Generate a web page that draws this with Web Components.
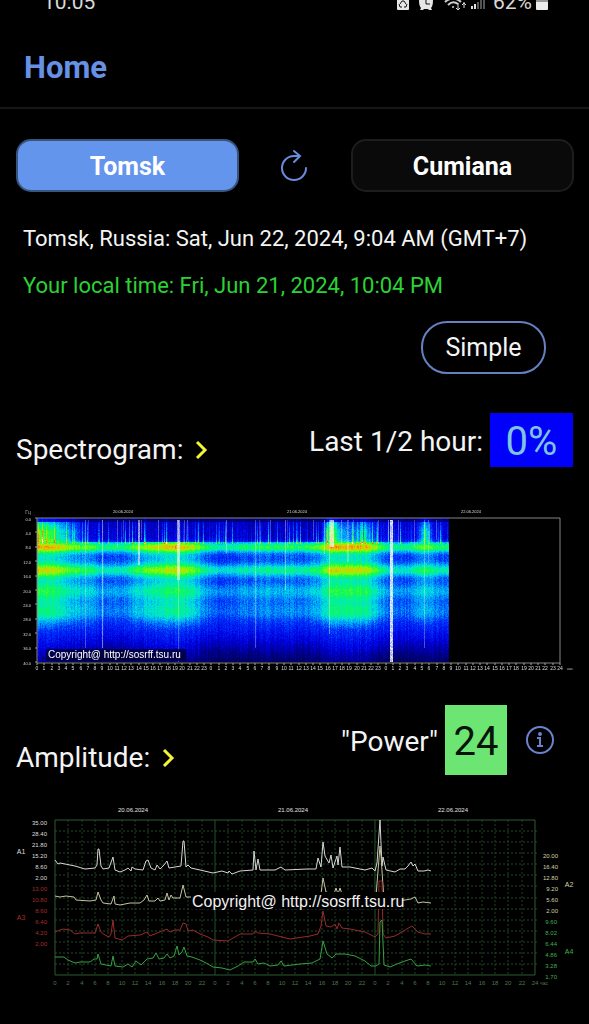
<!DOCTYPE html>
<html lang="en">
<head>
<meta charset="utf-8">
<meta name="viewport" content="width=device-width, initial-scale=1">
<title>Home</title>
<style>
  html { background: #000; }
  body { margin: 0; background: #000; color: #f4f4f4; font-family: Roboto, "Liberation Sans", sans-serif; }
</style>
</head>
<body>
<resonance-app></resonance-app>
<script>
const define = (tag, html, setup) => {
  const tpl = document.createElement('template');
  tpl.innerHTML = html;
  customElements.define(tag, class extends HTMLElement {
    constructor() {
      super();
      this.attachShadow({ mode: 'open' }).append(tpl.content.cloneNode(true));
    }
    connectedCallback() { if (setup) setup(this, this.shadowRoot); }
  });
};

define('status-bar', `
<style>
  :host { display: flex; justify-content: space-between; align-items: flex-end; height: 14px; overflow: hidden; padding: 0 41px 0 43px; font-size: 21px; line-height: 24px; color: #d8d8d8; }
  .right { display: flex; align-items: flex-end; gap: 4px; }
  svg { display: block; flex: none; }
</style>
<span>10:05</span>
<div class="right">
  <svg width="92" height="14" viewBox="0 0 92 14" aria-hidden="true">
    <path d="M0 0H12V9Q12 10 11 10H1Q0 10 0 9Z" fill="#e6e6e6"/>
    <path d="M3 4L5 1H7L9 4M2 4L3 7H5M10 4L9 7H7" fill="none" stroke="#111" stroke-width="1"/>
    <path d="M22 0H36Q36 6 34 8L35 10H32L31 9H27L26 10H23L24 8Q22 6 22 0Z" fill="#e6e6e6"/>
    <path d="M29 0V4H33" fill="none" stroke="#111" stroke-width="1"/>
    <path d="M48 2Q56 -5 64 2M51 5Q56 0 61 4" fill="none" stroke="#ccc" stroke-width="2"/>
    <circle cx="56" cy="7" r="1" fill="#ccc"/>
    <path d="M61 3V10M59 8L61 10L63 8M67 8V2M65 5L67 3L69 5" fill="none" stroke="#ddd" stroke-width="1"/>
    <path d="M75 9V6M78 9V4" stroke="#ddd" stroke-width="2"/>
    <path d="M81 9V2M84 9V0M87 9V0" stroke="#555" stroke-width="2"/>
  </svg>
  <span>62%</span>
  <svg width="12" height="14" viewBox="0 0 12 14" aria-hidden="true"><path d="M0 0H12V9Q12 10 11 10H1Q0 10 0 9Z" fill="#eee"/><path d="M0 0H12V2H0Z" fill="#999"/></svg>
</div>`);

define('app-header', `
<style>
  :host { display: flex; align-items: center; height: 95px; padding: 0 24px; border-bottom: 2px solid #161616; box-sizing: border-box; }
  a { color: #6791e4; font-size: 31px; line-height: 36px; font-weight: 700; text-decoration: none; margin-top: 14px; }
</style>
<a href="#home"><slot></slot></a>`);

define('station-button', `
<style>
  :host { display: block; }
  button { display: block; width: 100%; height: 53px; border: 2px solid #1d1d1d; border-radius: 15px; background: #0a0a0a; color: #fff; font: 700 25px/30px Roboto, sans-serif; padding: 2px 0 0; }
  :host([active]) button { background: #6495ed; border-color: #38557f; }
</style>
<button type="button"><slot></slot></button>`);

define('icon-button', `
<style>
  :host { display: inline-flex; }
  button { display: flex; padding: 0; border: 0; background: none; color: inherit; }
</style>
<button type="button"><slot></slot></button>`,
(el, root) => root.querySelector('button').setAttribute('aria-label', el.getAttribute('label')));

define('pill-button', `
<style>
  :host { display: block; }
  button { display: block; width: 125px; height: 53px; border: 2px solid #6780c4; border-radius: 26px; background: transparent; color: #f4f4f4; font: 400 25px/30px Roboto, sans-serif; padding: 0; }
</style>
<button type="button"><slot></slot></button>`);

define('chart-heading', `
<style>
  :host { display: flex; align-items: flex-end; justify-content: space-between; }
  .title { display: flex; align-items: center; gap: 11px; }
  h2 { margin: 0; font-size: 28px; line-height: 34px; font-weight: 400; }
  icon-button { color: #f4f436; }
  .side { display: flex; align-items: center; }
</style>
<div class="title"><h2></h2>
  <icon-button label="Open chart"><svg width="14" height="20" viewBox="0 0 14 20"><path d="M3 2L11 10L3 18" fill="none" stroke="currentColor" stroke-width="3"/></svg></icon-button>
</div>
<div class="side"><slot></slot></div>`,
(el, root) => { root.querySelector('h2').textContent = el.getAttribute('heading'); });

define('value-badge', `
<style>
  :host { display: flex; align-items: center; justify-content: center; font-size: 40px; line-height: 48px; box-sizing: border-box; padding-top: 4px; }
  :host([tone="blue"]) { background: #0000fb; color: #7ec4de; height: 54px; width: 83px; }
  :host([tone="green"]) { background: #6de572; color: #08140a; height: 70px; width: 62px; }
</style>
<slot></slot>`);

/* Shared chart helpers */
const lerp = (pts, x) => {
  if (x <= pts[0][0]) return pts[0][1];
  for (let i = 1; i < pts.length; i++) {
    if (x <= pts[i][0]) {
      const [a, b] = pts[i - 1], [c, d] = pts[i];
      return b + (d - b) * (x - a) / (c - a);
    }
  }
  return pts[pts.length - 1][1];
};
const txt = (x, y, s, fill, anchor = 'middle', size = 7) =>
  `<text x="${x}" y="${y}" fill="${fill}" text-anchor="${anchor}" font-size="${size}">${s}</text>`;

const STOPS = [[0, 0, 0, 70], [.1, 0, 0, 130], [.2, 0, 0, 225], [.32, 0, 50, 250], [.44, 0, 160, 250], [.53, 0, 228, 215],
  [.64, 10, 250, 90], [.76, 140, 250, 0], [.85, 240, 190, 0], [.94, 250, 90, 30], [1, 255, 230, 220]];
const colour = v => {
  v = Math.max(0, Math.min(1, v));
  return [1, 2, 3].map(k => lerp(STOPS.map(s => [s[0], s[k]]), v));
};
const LUT = Array.from({ length: 256 }, (_, i) => colour(i / 255));

/* Strength of the resonance bands over time, in chart x */
const ENERGY = [[37, 1], [58, .95], [68, .72], [90, .55], [100, .35], [125, .38], [136, .65], [150, .8], [178, .98], [192, .8], [206, .42], [222, .12],
  [240, .3], [255, .42], [300, .4], [318, .6], [330, 1], [366, .98], [378, .65], [388, .3], [408, .3], [424, .7], [436, .4], [448, .3]];
const TOP = [[37, .72], [58, .55], [66, .4], [80, .2], [88, .08], [320, .06], [326, .45], [331, .8], [338, .45], [350, .3], [366, .4], [378, .12], [415, .12], [425, .55], [432, .15], [448, .08]];
/* x, width, strength, reach in Hz */
const STREAKS = [[85, 1, .3, 36], [88, 1, .2, 7], [102, 1, .5, 36], [117, 1, .3, 8], [123, 1, .25, 6], [129, 1, .25, 7], [138, 2, .6, 13], [141, 1, .3, 6], [158, 1, .35, 10],
  [177, 3, .6, 17], [178, 1, .3, 40], [184, 1, .3, 7], [187, 1, .3, 6], [226, 1, .4, 10], [255, 1, .35, 36], [259, 1, .2, 14], [270, 1, .3, 7], [285, 1, .4, 20], [287, 1, .2, 8], [313, 1, .3, 6], [324, 1, .4, 10],
  [329, 1, .4, 32], [330, 4, .7, 8], [341, 1, .35, 7], [347, 2, .3, 12], [353, 1, .25, 6], [378, 1, .3, 7], [388, 1, .4, 6], [390, 3, .85, 40], [398, 1, .3, 7], [414, 1, .3, 8], [424, 1, .3, 36], [428, 1, .3, 12], [436, 1, .3, 6]];

const paintSpectrum = canvas => {
  const W = canvas.width, H = canvas.height, ctx = canvas.getContext('2d');
  const img = ctx.createImageData(W, H);
  let seed = 7;
  const rnd = () => (seed = (seed * 16807) % 2147483647) / 2147483647;
  const g = (f, c, s) => Math.exp(-((f - c) ** 2) / (2 * s * s));
  for (let i = 0; i < W; i++) {
    const x = 37 + i, e = lerp(ENERGY, x), t = lerp(TOP, x);
    const col = (rnd() - .5) * .06, spike = rnd() > .72 ? rnd() * .3 : 0;
    for (let j = 0; j < H; j++) {
      const f = j / H * 40;
      let v = f < 6.5 ? .12 + t * .85 * Math.min(1, .55 + f / 8) : .27 + .27 * e ** 1.4;
      if (f > 27) v -= (v - .23) * Math.min(1, (f - 27) / 4) * .7;
      if (f > 31) v -= Math.min(.2, (f - 31) * .024);
      v += (.28 + .06 * e) * g(f, 8, 1) + (.22 + .06 * e) * g(f, 14.4, 1.2) + .12 * g(f, 20.3, 1.5) + .07 * g(f, 25.6, 1.6);
      if (f < 7) v += spike * (.4 + f / 10);
      v += col + (rnd() - .5) * .08;
      if (f < 1) v *= .5;
      let [r, gr, b] = LUT[Math.max(0, Math.min(255, Math.round(v * 255)))];
      for (const [sx, sw, st, reach] of STREAKS) {
        if (x >= sx && x < sx + sw && f < reach && f > .4) {
          const k = st * (.75 + rnd() * .4);
          r += (245 - r) * k; gr += (250 - gr) * k; b += (245 - b) * k;
        }
      }
      img.data.set([r, gr, b, 255], (j * W + i) * 4);
    }
  }
  ctx.putImageData(img, 0, 0);
};

define('spectrogram-chart', `
<style>
  :host { display: block; }
  svg { display: block; width: 100%; height: auto; font-family: "Liberation Sans", Arial, sans-serif; }
  canvas { display: block; width: 412px; height: 144px; }
</style>
<svg viewBox="0 0 589 180" role="img" aria-label="Spectrogram of three days"></svg>`,
(el, root) => {
  const svg = root.querySelector('svg');
  const step = 523 / 72;
  let s = '<foreignObject x="37" y="18" width="412" height="144"><canvas width="412" height="144"></canvas></foreignObject>';
  s += '<path d="M37 18H560V163H37Z" fill="none" stroke="#858585"/>';
  s += txt(28, 14, 'Гц', '#aaa', 'middle', 5);
  ['20.06.2024', '21.06.2024', '22.06.2024'].forEach((d, i) => { s += txt(123 + i * 174, 13, d, '#ddd', 'middle', 4); });
  for (let i = 0; i <= 10; i++) {
    s += txt(31, Math.round(20.5 + i * 14.4), (i * 4).toFixed(1), '#ddd', 'end', 4);
    s += `<path d="M35 ${Math.round(18 + i * 14.4)}H37" stroke="#999"/>`;
  }
  for (let i = 0; i <= 72; i++) {
    const x = Math.round(37 + i * step);
    s += `<path d="M${x} 163V165" stroke="#aaa"/>` + txt(x, 170, i === 72 ? 24 : i % 24, '#ddd', 'middle', 5);
  }
  s += txt(570, 170, 'час', '#bbb', 'middle', 4);
  s += '<rect x="46" y="149" width="140" height="12" fill="#00002a" opacity=".75"/>' + txt(48, 158, 'Copyright@ http://sosrff.tsu.ru', '#fff', 'start', 10);
  svg.innerHTML = s;
  paintSpectrum(root.querySelector('canvas'));
});

const TRACES = [
  ['#d6d6d6', '55,64 58,68 60,67 65,68 75,70 85,73 95,72 97,69 98,53 99,53 101,70 103,73 109,72 113,61 115,74 120,76 125,74 128,72 131,75 132,71 135,73 143,74 146,65 148,64 151,72 155,74 157,69 160,73 164,69 167,65 169,72 175,71 181,70 183,45 184,45 186,71 188,69 191,72 200,74 213,77 222,75 228,77 229,75 232,78 240,75 253,74 254,55 256,74 258,63 260,74 275,74 281,71 285,74 307,73 316,73 318,62 321,71 323,46 325,60 329,67 331,59 333,72 337,60 338,69 340,51 342,71 350,71 365,74 372,72 375,75 377,67 380,24 382,70 383,61 386,74 395,76 400,73 405,73 408,70 411,66 413,70 415,68 418,75 424,75 428,74 431,75'],
  ['#c4c4a0', '55,100 60,101 66,100 74,101 76,104 90,105 96,104 98,96 101,104 103,107 111,108 114,100 115,108 120,109 130,107 140,107 144,104 147,99 149,105 155,105 158,102 160,105 165,104 167,97 169,104 171,99 173,102 180,102 183,89 186,101 191,101 213,106 300,105 316,100 321,98 323,82 326,96 334,98 336,92 338,98 340,92 342,98 370,102 376,100 380,50 381,60 384,105 400,105 405,104 411,103 415,101 418,107 423,106 431,107'],
  ['#982a2a', '55,136 60,134 63,133 70,134 75,138 80,137 95,137 98,128 101,136 105,139 109,141 111,138 113,124 115,142 122,144 128,140 140,139 147,136 150,140 157,137 167,133 170,136 175,134 180,134 183,127 186,128 188,135 193,134 200,138 208,141 213,144 228,145 240,138 253,138 255,135 258,137 270,138 290,143 310,140 318,138 321,130 323,115 326,130 331,131 335,128 337,133 339,127 342,132 350,133 365,136 375,141 378,138 379,85 382,85 383,138 386,142 395,140 405,134 412,130 418,136 425,138 431,138'],
  ['#35a142', '55,161 64,161 68,164 75,167 80,166 90,166 94,163 97,163 98,158 101,168 106,169 111,170 113,160 115,170 123,171 128,168 132,171 136,165 141,169 147,163 153,162 156,157 159,163 164,162 167,158 170,162 174,160 177,150 179,159 182,156 184,151 187,160 192,161 200,164 208,168 213,171 222,172 230,174 238,170 244,166 253,166 255,163 258,168 264,167 270,170 278,169 281,165 284,170 300,168 312,167 320,163 323,145 327,158 332,162 336,158 345,158 355,160 365,165 371,170 376,170 379,168 380,126 382,124 384,169 390,171 397,168 405,165 411,163 417,170 425,169 431,170']
];

define('amplitude-chart', `
<style>
  :host { display: block; }
  svg { display: block; width: 100%; height: auto; font-family: "Liberation Sans", Arial, sans-serif; }
</style>
<svg viewBox="0 0 589 200" role="img" aria-label="Amplitude of three days"></svg>`,
(el, root) => {
  let s = '';
  for (let i = 1; i < 36; i++) {
    const x = Math.round(55 + i * 480 / 36);
    s += i % 12 ? `<path d="M${x} 24V179" stroke="#1f4222" stroke-dasharray="2 2"/>` : `<path d="M${x} 24V179" stroke="#1f5426"/>`;
  }
  for (let i = 1; i < 14; i++) {
    s += `<path d="M55 ${Math.round(24 + i * 155 / 14)}H537" stroke="#244827" stroke-dasharray="2 2"/>`;
  }
  s += '<path d="M55 24H535V179H55Z" fill="none" stroke="#2c5a30"/>';
  for (const [c, p] of TRACES) s += `<polyline points="${p}" fill="none" stroke="${c}" stroke-width="1"/>`;
  ['20.06.2024', '21.06.2024', '22.06.2024'].forEach((d, i) => { s += txt(133 + i * 160, 16, d, '#e2e2e2', 'middle', 6); });
  const col = (vals, x, top, fill, anchor) => vals.forEach((v, i) => { s += txt(x, top + i * 11, v, fill, anchor, 6); });
  col(['35.00', '28.40', '21.80', '15.20', '8.60', '2.00'], 47, 29, '#ddd', 'end');
  col(['13.00', '10.80', '8.60', '6.40', '4.20', '2.00'], 47, 95, '#a82c2c', 'end');
  col(['20.00', '16.40', '12.80', '9.20', '5.60', '2.00'], 558, 62, '#d4d4a8', 'end');
  col(['9.60', '8.02', '6.44', '4.86', '3.28', '1.70'], 557, 128, '#3eb04c', 'end');
  s += txt(21, 58, 'A1', '#ddd') + txt(21, 124, 'A3', '#a82c2c') + txt(569, 91, 'A2', '#d4d4a8') + txt(569, 158, 'A4', '#3eb04c');
  for (let i = 0; i <= 36; i++) {
    s += txt(Math.round(55 + i * 480 / 36), 189, i === 36 ? 24 : (i * 2) % 24, '#4c7850', 'middle', 6);
  }
  s += txt(544, 189, 'час', '#4c7850', 'middle', 5);
  s += '<rect x="191" y="96" width="211" height="17" fill="#000"/>' + txt(192, 111, 'Copyright@ http://sosrff.tsu.ru', '#f2f2f2', 'start', 16);
  root.querySelector('svg').innerHTML = s;
});

define('resonance-app', `
<style>
  :host { display: block; min-height: 100vh; background: #000; overflow: hidden; }
  .stations { display: grid; grid-template-columns: 1fr 112px 1fr; align-items: center; padding: 0 15px 0 16px; margin-top: 30px; }
  .stations icon-button { justify-self: center; color: #6b8cdc; }
  .times { padding: 0 23px; margin-top: 23px; }
  p { margin: 0; font-size: 22px; line-height: 47px; white-space: nowrap; }
  .local { color: #2bd235; }
  .mode { display: flex; justify-content: flex-end; padding: 0 43px; margin-top: 12px; }
  .heading { padding: 0 16px; }
  .spec { margin-top: 39px; }
  .amp { margin-top: 25px; padding-right: 34px; }
  .label { font-size: 28px; line-height: 34px; margin-right: 7px; padding-top: 4px; }
  .info { color: #6b82cc; margin-left: 18px; }
  svg { display: block; }
  spectrogram-chart { margin-top: 33px; }
  amplitude-chart { margin-top: 21px; }
</style>
<status-bar></status-bar>
<app-header>Home</app-header>
<main>
  <div class="stations">
    <station-button active>Tomsk</station-button>
    <icon-button label="Refresh"><svg width="30" height="34" viewBox="0 0 30 34" fill="none" stroke="currentColor" stroke-width="2" stroke-linecap="round"><path d="M26 19A12 12 0 1 1 14 7H20M14 2L20 7L14 13"/></svg></icon-button>
    <station-button>Cumiana</station-button>
  </div>
  <div class="times">
    <p>Tomsk, Russia: Sat, Jun 22, 2024, 9:04 AM (GMT+7)</p>
    <p class="local">Your local time: Fri, Jun 21, 2024, 10:04 PM</p>
  </div>
  <div class="mode"><pill-button>Simple</pill-button></div>
  <chart-heading class="heading spec" heading="Spectrogram:">
    <span class="label">Last 1/2 hour:</span><value-badge tone="blue">0%</value-badge>
  </chart-heading>
  <spectrogram-chart></spectrogram-chart>
  <chart-heading class="heading amp" heading="Amplitude:">
    <span class="label">"Power"</span><value-badge tone="green">24</value-badge>
    <icon-button class="info" label="About power"><svg width="30" height="30" viewBox="0 0 30 30" fill="none" stroke="currentColor" stroke-width="2"><circle cx="15" cy="15" r="13"/><path d="M12 13H15V21M12 21H18"/><circle cx="15" cy="9" r="1" fill="currentColor"/></svg></icon-button>
  </chart-heading>
  <amplitude-chart></amplitude-chart>
</main>`);
</script>
</body>
</html>
